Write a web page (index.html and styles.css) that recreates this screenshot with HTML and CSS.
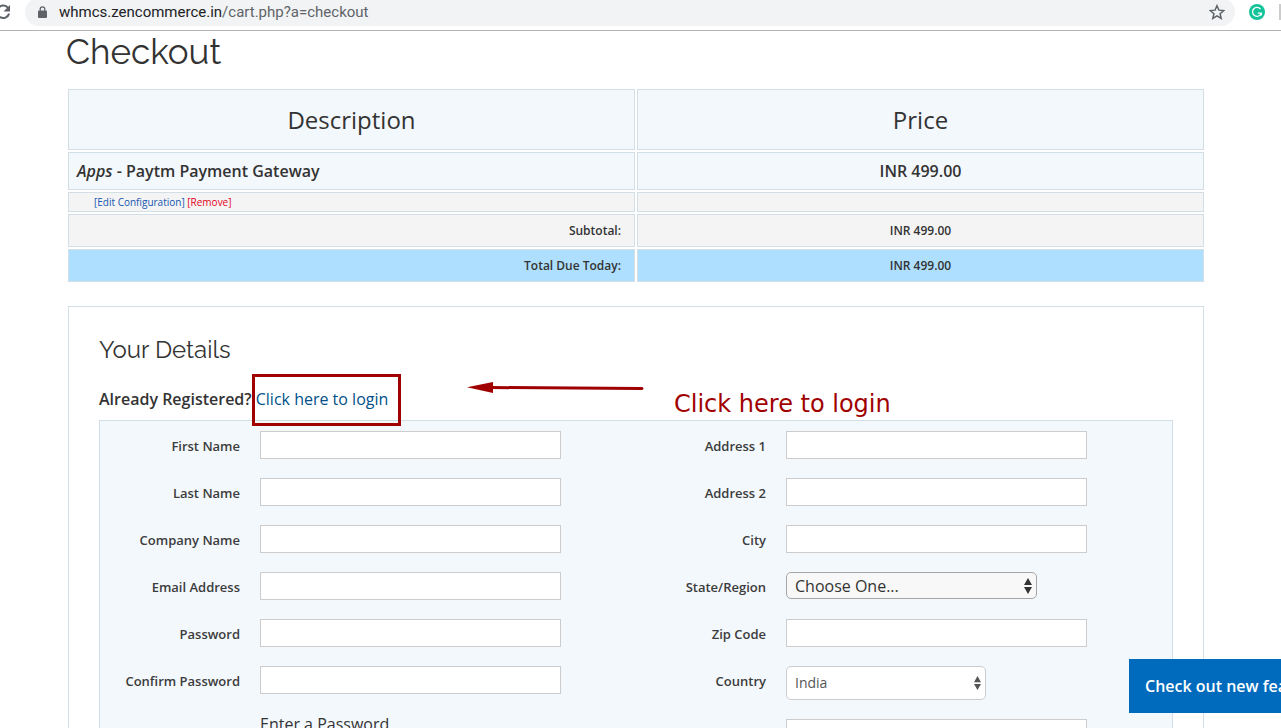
FILE: index.html
```html
<!DOCTYPE html>
<html lang="en">
<head>
<meta charset="utf-8">
<title>Checkout</title>
<link rel="stylesheet" href="styles.css">
</head>
<body>
<header class="toolbar">
  <button class="reload" aria-label="Reload"><svg width="16" height="16" viewBox="0 0 16 16"><path d="M13.2 4.2A6.2 6.2 0 1 0 14.1 9.600" fill="none" stroke="#5f6368" stroke-width="2"/><path d="M15 1v6.500H8.500z" fill="#5f6368"/></svg></button>
  <div class="address">
    <svg class="lock" width="10" height="12" viewBox="0 0 10 12"><rect x="0" y="4.500" width="9" height="7.500" rx="1" fill="#5f6368"/><path d="M2.200 5V3.200a2.300 2.300 0 0 1 4.600 0V5" fill="none" stroke="#5f6368" stroke-width="1.300"/></svg>
    <span class="url"><span class="host">whmcs.zencommerce.in</span>/cart.php?a=checkout</span>
    <svg class="star" width="16" height="16" viewBox="0 0 24 24"><path d="M12 2.500l2.900 6.700 7.200.600-5.500 4.800 1.700 7.100L12 17.900l-6.300 3.800 1.700-7.100-5.500-4.800 7.200-.600z" fill="none" stroke="#5f6368" stroke-width="2.200"/></svg>
  </div>
  <svg class="ext" width="16" height="16" viewBox="0 0 16 16"><circle cx="8" cy="8" r="8" fill="#15c39a"/><path d="M11.500 5A4.500 4.500 0 1 0 12.300 9.200H8.800M12.300 9.200v2.300" fill="none" stroke="#fff" stroke-width="1.300"/></svg>
  <span class="divider"></span>
</header>
<main class="container">
  <h1>Checkout</h1>
  <table class="cart">
    <thead><tr><th>Description</th><th>Price</th></tr></thead>
    <tbody>
      <tr class="product"><td><em>Apps</em> - Paytm Payment Gateway</td><td>INR 499.00</td></tr>
      <tr class="actions"><td><a class="edit" href="#">[Edit Configuration]</a> <a class="remove" href="#">[Remove]</a></td><td></td></tr>
      <tr class="sum"><td>Subtotal:</td><td>INR 499.00</td></tr>
      <tr class="sum total"><td>Total Due Today:</td><td>INR 499.00</td></tr>
    </tbody>
  </table>
  <section class="details">
    <h2>Your Details</h2>
    <p class="registered"><strong>Already Registered?</strong> <a href="#">Click here to login</a>
      <span class="highlight"></span>
      <svg class="arrow" width="178" height="12" viewBox="0 0 178 12"><path d="M24 5.500L175 6.500" stroke="#a00000" stroke-width="3" stroke-linecap="round"/><path d="M0 5.200L26 0v11z" fill="#a00000"/></svg>
      <span class="note">Click here to login</span>
    </p>
    <form class="fields">
      <div class="column">
        <div class="row"><label for="first">First Name</label><input id="first" type="text"></div>
        <div class="row"><label for="last">Last Name</label><input id="last" type="text"></div>
        <div class="row"><label for="company">Company Name</label><input id="company" type="text"></div>
        <div class="row"><label for="email">Email Address</label><input id="email" type="email"></div>
        <div class="row"><label for="pass">Password</label><input id="pass" type="password"></div>
        <div class="row"><label for="confirm">Confirm Password</label><input id="confirm" type="password"></div>
        <div class="hint">Enter a Password</div>
      </div>
      <div class="column">
        <div class="row"><label for="addr1">Address 1</label><input id="addr1" type="text"></div>
        <div class="row"><label for="addr2">Address 2</label><input id="addr2" type="text"></div>
        <div class="row"><label for="city">City</label><input id="city" type="text"></div>
        <div class="row"><label for="state">State/Region</label><span class="select state"><select id="state"><option>Choose One...</option></select><svg width="8" height="16" viewBox="0 0 8 16"><path d="M4 0l4 7H0zM4 16L0 9h8z" fill="#333"/></svg></span></div>
        <div class="row"><label for="zip">Zip Code</label><input id="zip" type="text"></div>
        <div class="row"><label for="country">Country</label><span class="select country"><select id="country"><option>India</option></select><svg width="7" height="14" viewBox="0 0 8 16"><path d="M4 0l4 7H0zM4 16L0 9h8z" fill="#555"/></svg></span></div>
        <div class="row unlabelled"><input type="tel" aria-label="Phone"></div>
      </div>
    </form>
  </section>
</main>
<a class="banner" href="#">Check out new features</a>
</body>
</html>
```
FILE: styles.css
```css
* { box-sizing: border-box; }
body {
  margin: 0;
  height: 100vh;
  overflow: hidden;
  background: #fff;
  color: #333;
  font-family: "Open Sans", sans-serif;
  font-size: 16px;
  line-height: 24px;
}
a { text-decoration: none; }
.toolbar {
  display: flex;
  align-items: flex-start;
  height: 31px;
  border-bottom: 1px solid #b3b3b3;
  overflow: hidden;
}
.reload {
  width: 16px;
  height: 16px;
  margin: 4px 14px 0 -5px;
  padding: 0;
  border: 0;
  background: none;
}
.reload svg { display: block; }
.address {
  flex: 1;
  display: flex;
  align-items: center;
  height: 28px;
  margin-top: -2px;
  padding: 0 10px 0 13px;
  border-radius: 14px;
  background: #f1f3f4;
}
.lock { margin-right: 11px; }
.url {
  flex: 1;
  color: #5f6368;
  font-family: Roboto, sans-serif;
  font-size: 15px;
}
.host { color: #202124; }
.ext { margin: 4px 14px 0; }
.divider { width: 2px; height: 16px; margin-top: 4px; background: #ccc; }
.container { padding: 0 75px 0 66px; }
h1, h2 { margin: 0; font-family: Raleway, Lato, sans-serif; font-weight: 400; }
h1 { padding: 1px 0 15px; font-size: 35px; line-height: 40px; }
.cart {
  width: 100%;
  table-layout: fixed;
  border-collapse: separate;
  border-spacing: 2px;
}
.cart th, .cart td {
  padding: 0 8px;
  border: 1px solid #d2dfe6;
  background: #f3f8fc;
  text-align: center;
}
.cart th { height: 61px; font-size: 24px; font-weight: 400; }
.product td { height: 38px; font-weight: 600; }
.cart .actions td { height: 20px; padding: 0 25px; background: #f4f4f4; font-size: 10px; line-height: 16px; }
.cart .sum td { height: 33px; padding: 0 13px; background: #f4f4f4; font-size: 12px; font-weight: 600; line-height: 16px; }
.cart .total td { background: #aedfff; }
.product td:first-child, .cart .actions td:first-child { text-align: left; }
.cart .sum td:first-child { text-align: right; }
.edit { color: #1456b0; }
.remove { color: #e2001a; }
.details {
  margin: 22px 2px 0;
  padding: 27px 30px 30px;
  border: 1px solid #d2dfe6;
}
h2 { font-size: 24px; line-height: 32px; }
.registered { position: relative; margin: 0; padding: 21px 0 9px; }
.registered strong { font-weight: 600; }
.registered a { color: #00518a; }
.highlight {
  position: absolute;
  top: 8px;
  left: 153px;
  width: 149px;
  height: 52px;
  border: 3px solid #a00000;
}
.arrow { position: absolute; top: 16px; left: 368px; }
.note {
  position: absolute;
  top: 22px;
  left: 575px;
  color: #a00000;
  font-family: "DejaVu Sans", sans-serif;
  font-size: 24px;
  line-height: 32px;
  white-space: nowrap;
}
.fields {
  display: grid;
  grid-template-columns: 1fr 1fr;
  padding: 10px 20px 20px 0;
  border: 1px solid #d2dfe6;
  background: #f3f8fc;
}
.column { display: flex; flex-direction: column; gap: 19px; }
.row { display: flex; gap: 20px; align-items: flex-start; min-height: 28px; }
.unlabelled { padding-left: 160px; }
.row label {
  width: 140px;
  padding-top: 3px;
  color: #3c3c3c;
  font-size: 13px;
  font-weight: 600;
  text-align: right;
}
.row input {
  width: 301px;
  height: 28px;
  padding: 0 8px;
  border: 1px solid #ccc;
  background: #fff;
  font: inherit;
}
.hint { padding-left: 160px; line-height: 22px; }
.select { position: relative; }
.select select {
  display: block;
  width: 100%;
  height: 100%;
  padding: 0 8px;
  border: 1px solid #a6a6a6;
  border-radius: 5px;
  appearance: none;
  background: #f8f8f8;
  color: #333;
  font: inherit;
}
.select svg { position: absolute; top: 50%; right: 5px; transform: translateY(-50%); }
.state { width: 251px; height: 27px; }
.country { width: 200px; height: 34px; }
.country select { border-color: #ccc; background: #fff; color: #555; font-size: 14px; }
.banner {
  position: fixed;
  right: 0;
  bottom: 15px;
  width: 152px;
  padding: 15px 0 15px 16px;
  overflow: hidden;
  background: #006bbd;
  color: #fff;
  font-weight: 600;
  white-space: nowrap;
}
```
